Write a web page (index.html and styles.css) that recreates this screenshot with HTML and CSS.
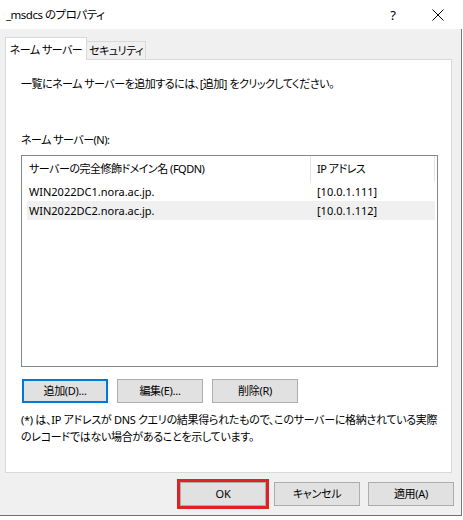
FILE: index.html
```html
<!DOCTYPE html>
<html lang="ja">
<head>
<meta charset="utf-8">
<title>_msdcs のプロパティ</title>
<link rel="stylesheet" href="styles.css">
</head>
<body>
<div class="window">
  <div class="titlebar">
    <span class="title">_msdcs のプロパティ</span>
    <span class="help">?</span>
    <svg class="close" width="12" height="12" viewBox="0 0 12 12"><path d="M0.5 0.5 L11.5 11.5 M11.5 0.5 L0.5 11.5" stroke="#000" stroke-width="1" fill="none"/></svg>
  </div>
  <div class="body">
    <div class="tabs">
      <div class="tab active">ネーム サーバー</div>
      <div class="tab">セキュリティ</div>
    </div>
    <div class="panel">
      <p class="intro">一覧にネーム サーバーを追加するには、[追加] をクリックしてください。</p>
      <p class="label">ネーム サーバー(N):</p>
      <div class="list">
        <div class="row head">
          <div class="c1">サーバーの完全修飾ドメイン名 (FQDN)</div>
          <div class="c2">IP アドレス</div>
        </div>
        <div class="row data">
          <div class="c1">WIN2022DC1.nora.ac.jp.</div>
          <div class="c2">[10.0.1.111]</div>
        </div>
        <div class="row data sel">
          <div class="c1">WIN2022DC2.nora.ac.jp.</div>
          <div class="c2">[10.0.1.112]</div>
        </div>
      </div>
      <div class="btns">
        <button class="btn focus">追加(D)...</button>
        <button class="btn">編集(E)...</button>
        <button class="btn">削除(R)</button>
      </div>
      <p class="note">(*) は、IP アドレスが DNS クエリの結果得られたもので、このサーバーに格納されている実際<br>のレコードではない場合があることを示しています。</p>
    </div>
    <div class="footer">
      <button class="btn ok">OK</button>
      <button class="btn">キャンセル</button>
      <button class="btn">適用(A)</button>
    </div>
  </div>
</div>
</body>
</html>
```

FILE: styles.css
```css
* { box-sizing: border-box; }
html, body { margin: 0; padding: 0; background: #fff; }
body {
  font-family: "Noto Sans", "Noto Sans CJK JP", sans-serif;
  font-size: 11px;
  color: #000;
  font-feature-settings: "palt";
  letter-spacing: -0.5px;
}
.window { width: 462px; }
.titlebar {
  height: 29px;
  display: flex;
  align-items: center;
  background: #fff;
  padding-left: 6px;
}
.title { flex: 1; font-size: 11.5px; line-height: 16px; }
.help { font-size: 13px; margin-right: 36px; line-height: 16px; letter-spacing: 0; }
.close { margin-right: 18px; }
.body {
  background: #f0f0f0;
  border-right: 1px solid #7a7a7a;
  border-bottom: 1px solid #6e6e6e;
  height: 487px;
  padding: 8px 0 0 5px;
}
.tabs { display: flex; align-items: flex-end; height: 22px; }
.tab {
  border: 1px solid #d9d9d9;
  border-bottom: none;
  height: 18px;
  line-height: 17px;
  padding: 0;
  background: #f0f0f0;
  width: 59px;
  text-align: center;
  white-space: nowrap;
}
.tab.active {
  background: #fff;
  height: 23px;
  width: 82px;
  line-height: 24px;
  position: relative;
  z-index: 1;
  margin-bottom: -1px;
}
.tab.active + .tab { border-left: none; }
.panel {
  width: 447px;
  height: 414px;
  background: #fff;
  border: 1px solid #d9d9d9;
  padding: 16px 0 0 15px;
}
.intro { margin: 0; line-height: 16px; white-space: nowrap; }
.label { margin: 40px 0 0; line-height: 16px; }
.list {
  margin-top: 7px;
  width: 417px;
  height: 212px;
  border: 1px solid #828790;
  padding: 0 2px 0 5px;
}
.row { display: flex; height: 19px; line-height: 19px; }
.row.data { letter-spacing: 0; }
.row.head { height: 26px; line-height: 26px; }
.row.sel { background: #f0f0f0; }
.c1 { width: 284px; padding-left: 2px; white-space: nowrap; }
.c2 { width: 124px; padding-left: 6px; white-space: nowrap; }
.head .c1, .head .c2 { border-right: 1px solid #e5e5e5; }
.btns { display: flex; gap: 9px; margin: 12px 0 0 1px; }
.btn {
  font: inherit;
  font-feature-settings: "palt";
  letter-spacing: -0.3px;
  width: 86px;
  height: 24px;
  padding: 0;
  background: #e1e1e1;
  border: 1px solid #adadad;
  color: #000;
  line-height: 20px;
}
.btn.focus { border: 2px solid #0078d7; }
.note { margin: 8px 0 0; line-height: 17px; white-space: nowrap; letter-spacing: -0.3px; }
.footer {
  display: flex;
  justify-content: flex-end;
  gap: 8px;
  margin-top: 9px;
  padding-right: 7px;
}
.btn.ok { outline: 3px solid #e0202a; }
```
